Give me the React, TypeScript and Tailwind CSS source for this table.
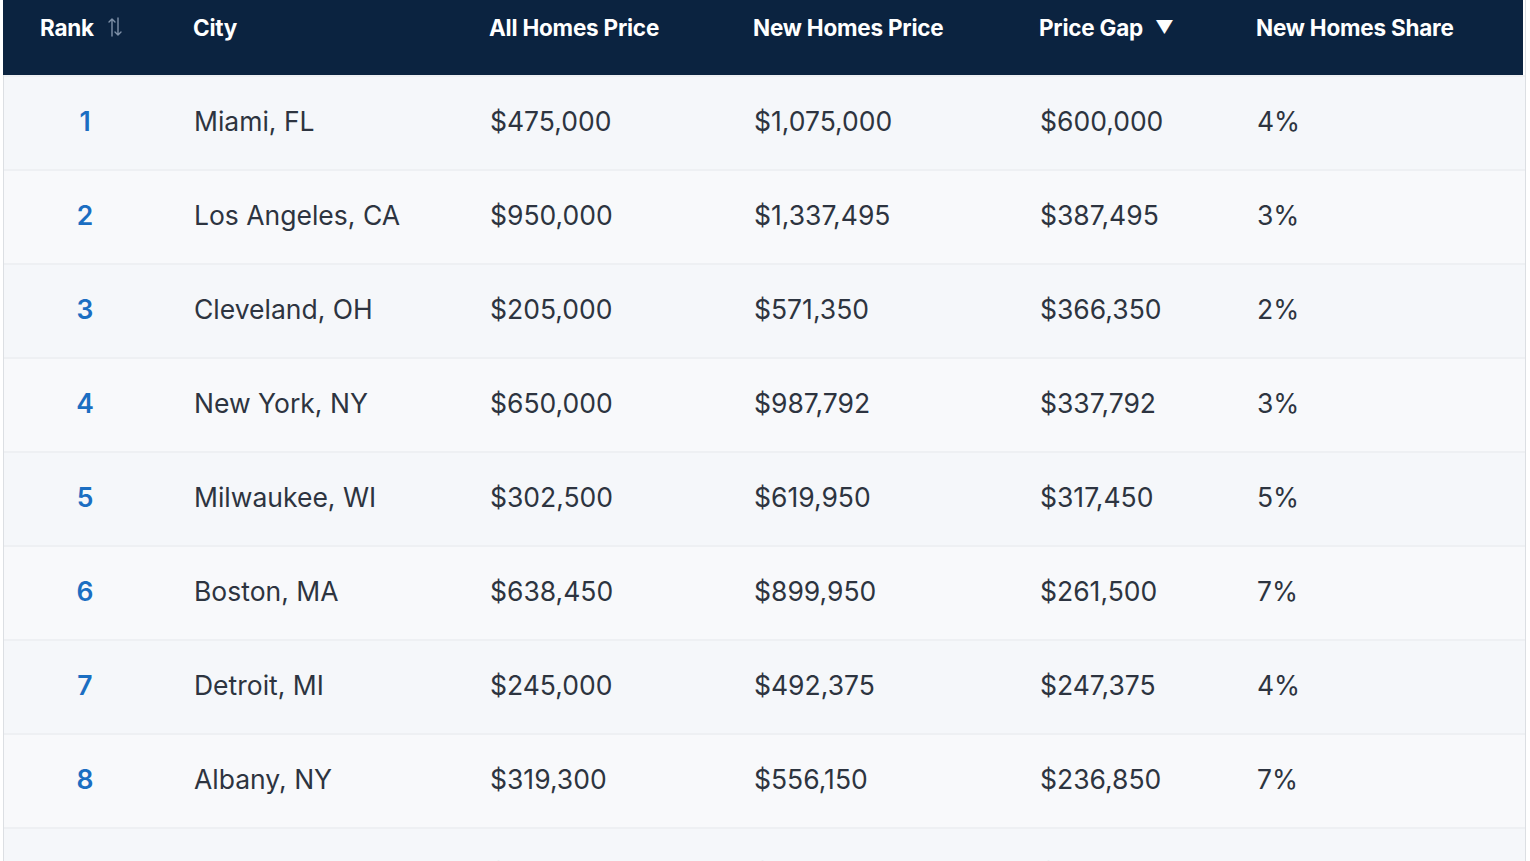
import React from "react";

const rows = [
  { rank: 1, city: "Miami, FL", all: "$475,000", fresh: "$1,075,000", gap: "$600,000", share: "4%" },
  { rank: 2, city: "Los Angeles, CA", all: "$950,000", fresh: "$1,337,495", gap: "$387,495", share: "3%" },
  { rank: 3, city: "Cleveland, OH", all: "$205,000", fresh: "$571,350", gap: "$366,350", share: "2%" },
  { rank: 4, city: "New York, NY", all: "$650,000", fresh: "$987,792", gap: "$337,792", share: "3%" },
  { rank: 5, city: "Milwaukee, WI", all: "$302,500", fresh: "$619,950", gap: "$317,450", share: "5%" },
  { rank: 6, city: "Boston, MA", all: "$638,450", fresh: "$899,950", gap: "$261,500", share: "7%" },
  { rank: 7, city: "Detroit, MI", all: "$245,000", fresh: "$492,375", gap: "$247,375", share: "4%" },
  { rank: 8, city: "Albany, NY", all: "$319,300", fresh: "$556,150", gap: "$236,850", share: "7%" },
  { rank: 9, city: "San Francisco, CA", all: "$1,150,000", fresh: "$1,375,000", gap: "$225,000", share: "3%" },
];

const cols = "grid grid-cols-[190px_296px_264px_286px_217px_1fr]";

const SortIcon = () => (
  <svg width="14" height="22" viewBox="0 0 14 22" fill="none" stroke="#7f91a8" strokeWidth="1.4" strokeLinecap="round" strokeLinejoin="round">
    <path d="M4 20V3M1 6l3-3 3 3" />
    <path d="M10 2v17M7 16l3 3 3-3" />
  </svg>
);

const App = () => {
  return (
    <div className="h-[861px] overflow-hidden bg-white pl-[3px] font-['Inter','Liberation_Sans',sans-serif]">
      <div className="w-[1523px] border-x border-[#dcdfe3]">
        <div className={`${cols} h-[75px] -ml-px w-[1520px] bg-[#0b2340] text-[22.5px] font-bold tracking-[-0.01em] text-white`}>
          <div className="flex items-start gap-[14px] pl-[37px] pt-[11px]">
            <span>Rank</span>
            <span className="mt-[5px]">
              <SortIcon />
            </span>
          </div>
          <div className="pt-[11px]">City</div>
          <div className="pt-[11px]">All Homes Price</div>
          <div className="pt-[11px]">New Homes Price</div>
          <div className="flex items-start gap-[12px] pt-[11px]">
            <span>Price Gap</span>
            <span className="mt-[2px] text-[18px]">▼</span>
          </div>
          <div className="pt-[11px]">New Homes Share</div>
        </div>

        {rows.map((r, i) => {
          const faded = i === 8;
          return (
            <div
              key={r.rank}
              className={`${cols} h-[94px] items-center border-t-2 border-[#eef0f3] pb-[2px] text-[26.5px] ${
                i % 2 === 0 ? "bg-[#f5f7fa]" : "bg-[#f8f9fb]"
              } ${i === 0 ? "border-t-0 h-[93px]" : ""} ${faded ? "text-[#e4e7ec]" : "text-[#2d3440]"}`}
            >
              <div className="pl-[37px]">
                <div className={`w-[88px] text-center font-semibold ${faded ? "text-[#e1e6ee]" : "text-[#1b6ec2]"}`}>
                  {r.rank}
                </div>
              </div>
              <div>{r.city}</div>
              <div>{r.all}</div>
              <div>{r.fresh}</div>
              <div>{r.gap}</div>
              <div>{r.share}</div>
            </div>
          );
        })}
      </div>
    </div>
  );
};

export default App;
